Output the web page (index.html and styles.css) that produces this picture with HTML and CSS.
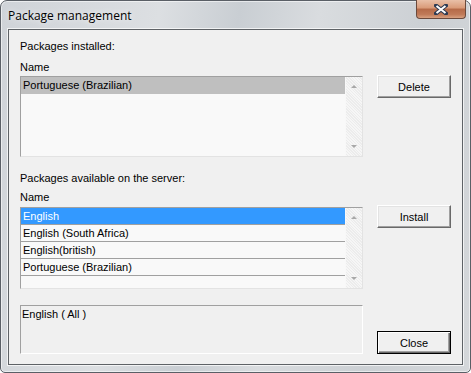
FILE: index.html
```html
<!DOCTYPE html>
<html>
<head>
<meta charset="utf-8">
<link rel="stylesheet" href="styles.css">
</head>
<body>
<div class="window">
  <div class="titlebar">
    <span class="title">Package management</span>
    <div class="close-x">
      <svg width="14" height="11" viewBox="0 0 14 11"><path d="M2 1.5 L12 9.5 M12 1.5 L2 9.5" stroke="#2c3a52" stroke-width="4" stroke-linecap="square"/><path d="M2.5 2 L11.5 9 M11.5 2 L2.5 9" stroke="#fff" stroke-width="2"/></svg>
    </div>
  </div>
  <div class="client">
    <div class="label l-first">Packages installed:</div>
    <div class="label l-name">Name</div>
    <div class="row">
      <div class="list list1">
        <div class="items">
          <div class="item hl">Portuguese (Brazilian)</div>
        </div>
        <div class="scroll">
          <span class="arr up"></span>
          <span class="arr down"></span>
        </div>
      </div>
      <button class="btn b-delete">Delete</button>
    </div>
    <div class="label l-second">Packages available on the server:</div>
    <div class="label l-name2">Name</div>
    <div class="row">
      <div class="list list2">
        <div class="items">
          <div class="item sel grid">English</div>
          <div class="item grid">English (South Africa)</div>
          <div class="item grid">English(british)</div>
          <div class="item grid">Portuguese (Brazilian)</div>
        </div>
        <div class="scroll">
          <span class="arr up"></span>
          <span class="arr down"></span>
        </div>
      </div>
      <button class="btn b-install">Install</button>
    </div>
    <div class="row bottom-row">
      <div class="info">English ( All )</div>
      <button class="btn b-close">Close</button>
    </div>
  </div>
</div>
</body>
</html>
```
FILE: styles.css
```css
html, body {
  margin: 0;
  padding: 0;
  background: #ffffff;
}
body {
  width: 471px;
  height: 373px;
  overflow: hidden;
  font-family: "Liberation Sans", Arial, sans-serif;
  font-size: 11px;
  color: #000;
}
.window {
  box-sizing: border-box;
  width: 471px;
  height: 373px;
  border: 1px solid #5a5f66;
  border-radius: 7px 7px 5px 5px;
  background: linear-gradient(100deg, #cfd3d8 0%, #dcdfe2 30%, #c9ced3 45%, #d9dcdf 60%, #ccd0d4 80%, #d4d7da 100%);
  display: flex;
  flex-direction: column;
  box-shadow: inset 0 0 0 1px rgba(255,255,255,0.55);
}
.titlebar {
  height: 28px;
  display: flex;
  align-items: flex-start;
  flex: none;
}
.title {
  font-family: "Open Sans", "Noto Sans", sans-serif;
  font-size: 12px;
  margin: 6px 0 0 7px;
  color: #000;
  text-shadow: 0 0 6px rgba(255,255,255,0.9);
}
.close-x {
  margin: -1px 4px 0 auto;
  width: 50px;
  height: 19px;
  box-sizing: border-box;
  border: 1px solid #6b4a3c;
  border-top: none;
  border-radius: 0 0 4px 4px;
  background: linear-gradient(#e9c0a8 0%, #d99a78 45%, #b56a48 50%, #c07a58 80%, #d8a080 100%);
  display: flex;
  align-items: center;
  justify-content: center;
}
.client {
  flex: none;
  margin: 0 7px 0 7px;
  height: 336px;
  box-sizing: border-box;
  border: 1px solid #5e6266;
  box-shadow: 0 0 0 1px rgba(255,255,255,0.7);
  background: #f0f0f0;
  padding: 0 11px 0 11px;
  display: flex;
  flex-direction: column;
}
.label {
  line-height: 13px;
  height: 13px;
}
.l-first { margin-top: 10px; }
.l-name { margin-top: 8px; }
.l-second { margin-top: 15px; }
.l-name2 { margin-top: 6px; }
.row {
  display: flex;
  align-items: flex-start;
  gap: 14px;
}
.list {
  box-sizing: border-box;
  width: 343px;
  border: 1px solid;
  border-color: #a0a0a0 #e3e3e3 #e3e3e3 #a0a0a0;
  background: #f9f9f9;
  display: flex;
}
.list1 { height: 81px; margin-top: 2px; }
.list2 { height: 82px; margin-top: 3px; }
.items {
  flex: 1;
  display: flex;
  flex-direction: column;
}
.item {
  height: 17px;
  line-height: 16px;
  padding-left: 2px;
  box-sizing: border-box;
  white-space: nowrap;
}
.item.grid {
  border-bottom: 1px solid #a0a0a0;
}
.hl {
  background: #bfbfbf;
}
.sel {
  background: #3399ff;
  color: #fff;
}
.scroll {
  width: 17px;
  flex: none;
  box-sizing: border-box;
  background-color: #f3f3f3;
  background-image: repeating-linear-gradient(45deg, #f6f6f6 0 1px, #ececec 1px 2px);
  border-left: 1px solid #f8f8f8;
  position: relative;
}
.arr {
  position: absolute;
  left: 5px;
  width: 0;
  height: 0;
  border-left: 3px solid transparent;
  border-right: 3px solid transparent;
}
.arr.up {
  top: 8px;
  border-bottom: 3px solid #a8a8a8;
}
.arr.down {
  bottom: 8px;
  border-top: 3px solid #a8a8a8;
}
.btn {
  font-family: "Liberation Sans", Arial, sans-serif;
  font-size: 11px;
  width: 74px;
  height: 23px;
  padding: 0;
  box-sizing: border-box;
  background: #f0f0f0;
  border: 1px solid;
  border-color: #ffffff #696969 #696969 #ffffff;
  box-shadow: inset -1px -1px 0 #a0a0a0, inset 1px 1px 0 #e3e3e3;
  color: #000;
}
.b-delete { margin-top: 1px; }
.b-install { margin-top: 1px; }
.b-close {
  margin-top: 26px;
  border: 1px solid #000;
  box-shadow: inset 1px 1px 0 #fff, inset -1px -1px 0 #696969, inset -2px -2px 0 #a0a0a0;
}
.bottom-row {
  margin-top: 16px;
}
.info {
  box-sizing: border-box;
  width: 343px;
  height: 49px;
  border: 1px solid;
  border-color: #a0a0a0 #ffffff #ffffff #a0a0a0;
  padding: 1px 0 0 1px;
  line-height: 14px;
}
```
